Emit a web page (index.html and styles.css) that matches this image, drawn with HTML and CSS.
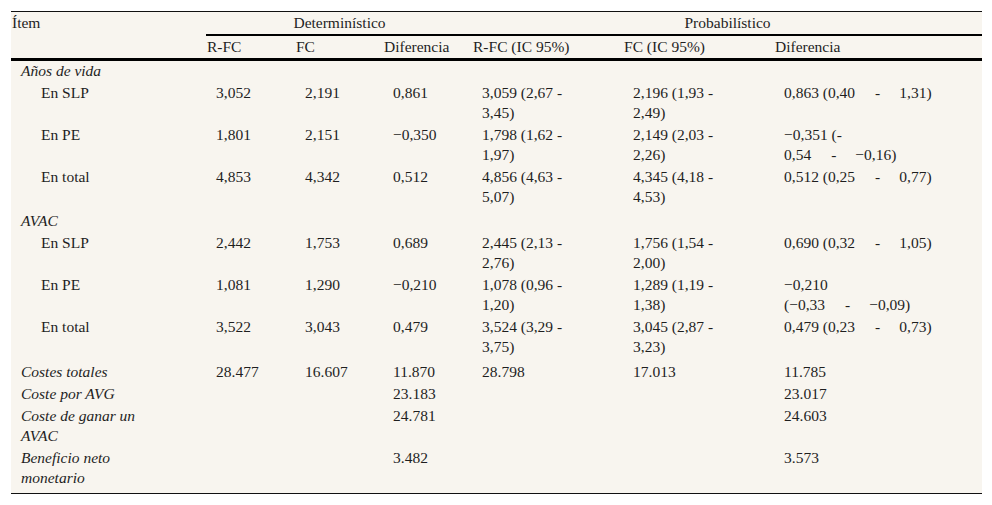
FILE: index.html
```html
<!DOCTYPE html>
<html lang="es">
<head>
<meta charset="utf-8">
<title>Tabla</title>
<link rel="stylesheet" href="styles.css">
</head>
<body>
<div class="wrap">
<table class="tbl">
  <colgroup>
    <col class="c-item"><col class="c-n"><col class="c-n2"><col class="c-n"><col class="c-ic"><col class="c-ic"><col class="c-dif">
  </colgroup>
  <thead>
    <tr>
      <th rowspan="2" class="h-item">Ítem</th>
      <th colspan="3" class="h-group">Determinístico</th>
      <th colspan="3" class="h-group">Probabilístico</th>
    </tr>
    <tr class="h-sub">
      <th>R-FC</th><th>FC</th><th>Diferencia</th><th>R-FC (IC 95%)</th><th>FC (IC 95%)</th><th>Diferencia</th>
    </tr>
  </thead>
  <tbody>
    <tr class="first"><td class="lbl">Años de vida</td><td></td><td></td><td></td><td></td><td></td><td></td></tr>
    <tr><td class="sub">En SLP</td><td>3,052</td><td>2,191</td><td>0,861</td><td>3,059 (2,67 -<br>3,45)</td><td>2,196 (1,93 -<br>2,49)</td><td>0,863 (0,40<span class="dash">-</span>1,31)</td></tr>
    <tr><td class="sub">En PE</td><td>1,801</td><td>2,151</td><td>−0,350</td><td>1,798 (1,62 -<br>1,97)</td><td>2,149 (2,03 -<br>2,26)</td><td>−0,351 (-<br>0,54<span class="dash">-</span>−0,16)</td></tr>
    <tr><td class="sub">En total</td><td>4,853</td><td>4,342</td><td>0,512</td><td>4,856 (4,63 -<br>5,07)</td><td>4,345 (4,18 -<br>4,53)</td><td>0,512 (0,25<span class="dash">-</span>0,77)</td></tr>
    <tr class="grp"><td class="lbl">AVAC</td><td></td><td></td><td></td><td></td><td></td><td></td></tr>
    <tr><td class="sub">En SLP</td><td>2,442</td><td>1,753</td><td>0,689</td><td>2,445 (2,13 -<br>2,76)</td><td>1,756 (1,54 -<br>2,00)</td><td>0,690 (0,32<span class="dash">-</span>1,05)</td></tr>
    <tr><td class="sub">En PE</td><td>1,081</td><td>1,290</td><td>−0,210</td><td>1,078 (0,96 -<br>1,20)</td><td>1,289 (1,19 -<br>1,38)</td><td>−0,210<br>(−0,33<span class="dash">-</span>−0,09)</td></tr>
    <tr><td class="sub">En total</td><td>3,522</td><td>3,043</td><td>0,479</td><td>3,524 (3,29 -<br>3,75)</td><td>3,045 (2,87 -<br>3,23)</td><td>0,479 (0,23<span class="dash">-</span>0,73)</td></tr>
    <tr class="grp costs"><td class="lbl">Costes totales</td><td>28.477</td><td>16.607</td><td>11.870</td><td>28.798</td><td>17.013</td><td>11.785</td></tr>
    <tr><td class="lbl">Coste por AVG</td><td></td><td></td><td>23.183</td><td></td><td></td><td>23.017</td></tr>
    <tr><td class="lbl">Coste de ganar un<br>AVAC</td><td></td><td></td><td>24.781</td><td></td><td></td><td>24.603</td></tr>
    <tr class="last"><td class="lbl">Beneficio neto<br>monetario</td><td></td><td></td><td>3.482</td><td></td><td></td><td>3.573</td></tr>
  </tbody>
</table>
</div>
</body>
</html>
```
FILE: styles.css
```css
html, body {
  margin: 0;
  padding: 0;
  background: #ffffff;
}
.wrap {
  padding: 11px 10px 0 11px;
}
.tbl {
  width: 971px;
  table-layout: fixed;
  border-collapse: collapse;
  background: #f8f5ef;
  font-family: "Liberation Serif", "Times New Roman", serif;
  font-size: 15.5px;
  line-height: 20px;
  color: #1e1e1e;
  border-top: 1px solid #111;
  border-bottom: 1px solid #111;
}
.c-item { width: 195px; }
.c-n { width: 89px; }
.c-n2 { width: 88px; }
.c-ic { width: 151px; }
.c-dif { width: 208px; }
.tbl th {
  font-weight: normal;
  text-align: left;
  vertical-align: top;
  padding: 1px 0 1px 1px;
}
.tbl th.h-group {
  text-align: center;
  border-bottom: 2px solid #000;
  padding-bottom: 1px;
}
.tbl thead tr.h-sub th {
  border-bottom: 3px solid #000;
}
.tbl th.h-item {
  border-bottom: 3px solid #000;
}
.tbl td {
  vertical-align: top;
  padding: 1px 0 1px 10px;
}
.tbl tr.first td { padding-top: 0; }
.tbl td.lbl {
  font-style: italic;
  padding-left: 10px;
}
.tbl td.sub {
  padding-left: 30px;
}
.tbl tr.grp td { padding-top: 3px; }
.tbl tr.costs td { padding-top: 4px; }
.tbl tr.last td { padding-bottom: 5px; }
.dash {
  display: inline-block;
  margin: 0 19px 0 20px;
}
```
